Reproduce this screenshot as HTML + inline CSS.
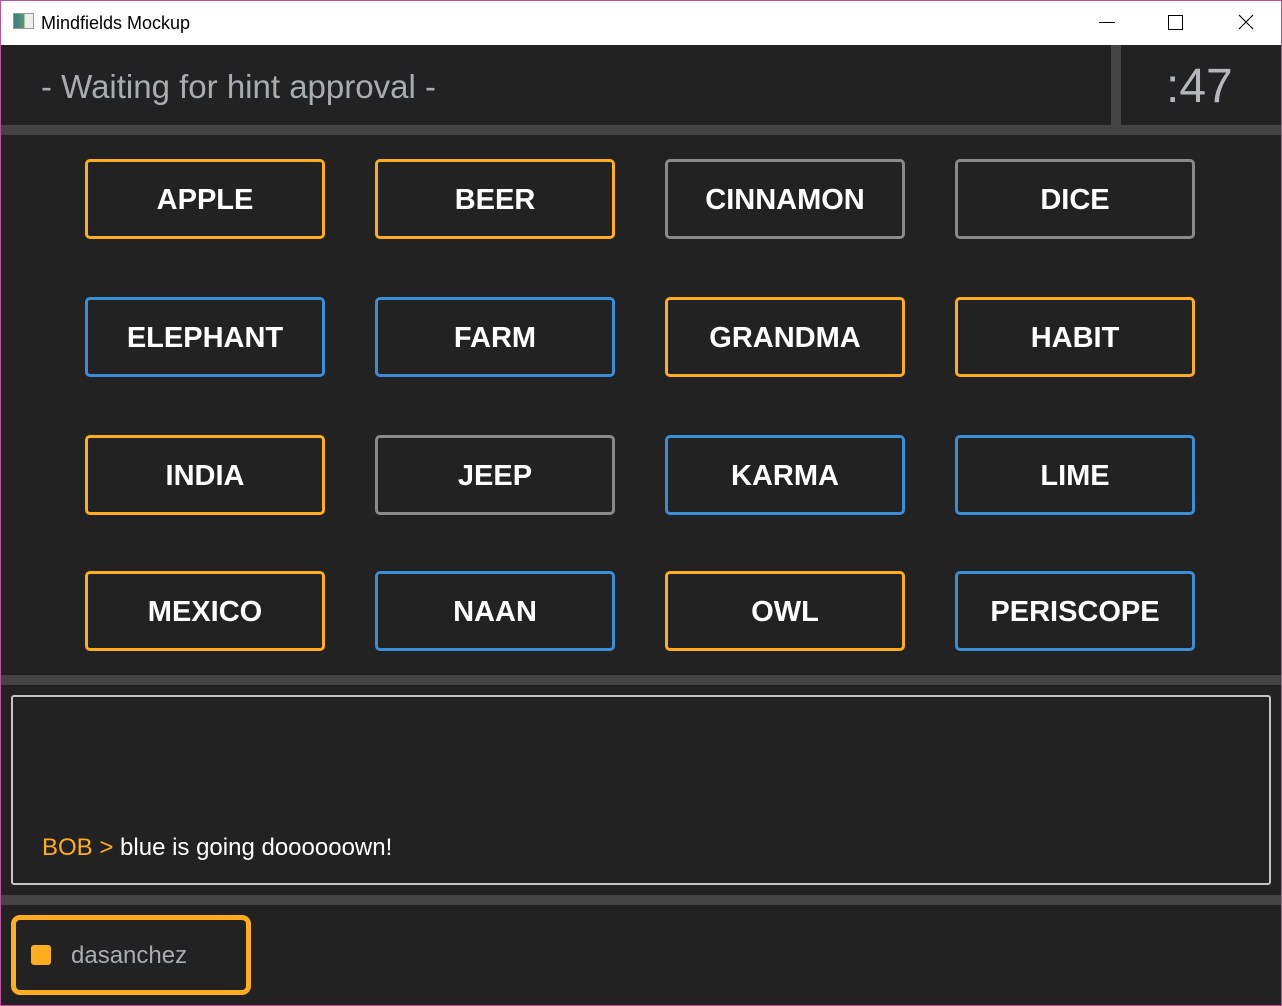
<!DOCTYPE html>
<html><head><meta charset="utf-8"><style>
*{margin:0;padding:0;box-sizing:border-box}
body{width:1282px;height:1006px;background:#222;font-family:"Liberation Sans",sans-serif;position:relative;overflow:hidden}
.frame{position:absolute;inset:0;border:1px solid #c2509f;pointer-events:none;z-index:9}
.title{position:absolute;left:0;top:0;width:1282px;height:45px;background:#fff}
.title .t{position:absolute;left:41px;top:13px;font-size:18px;color:#000}
.icon{position:absolute;left:13px;top:13px;width:21px;height:16px;border:1px solid #999;background:linear-gradient(90deg,#3b7a8a 0,#5a9a6a 55%,#eee 55%)}
.sep{position:absolute;background:#444}
.hdr{position:absolute;left:41px;top:68px;font-size:33px;color:#a9adb1}
.timer{position:absolute;left:1166px;top:59px;font-size:48px;color:#b4b8bc}
.b{position:absolute;width:240px;height:80px;border:3px solid;border-radius:5px;color:#fff;font-size:29px;font-weight:bold;display:flex;align-items:center;justify-content:center;padding-top:3px}
.o{border-color:#ffad1f}.l{border-color:#3a8ed8}.g{border-color:#8a8a8a}
.chat{position:absolute;left:11px;top:695px;width:1260px;height:190px;border:2px solid #c4c4c4;border-radius:3px}
.msg{position:absolute;left:42px;top:834px;font-size:24px;color:#fff}
.msg span{color:#ffad1f}
.user{position:absolute;left:11px;top:915px;width:240px;height:80px;border:5px solid #ffad1f;border-radius:9px}
.dot{position:absolute;left:31px;top:945px;width:20px;height:20px;background:#ffad1f;border-radius:3px}
.uname{position:absolute;left:71px;top:942px;font-size:24px;color:#a9adb1}
</style></head><body>
<div class="title"><div class="icon"></div><div class="t">Mindfields Mockup</div>
<svg style="position:absolute;left:1090px;top:10px" width="180" height="26" viewBox="0 0 180 26">
<line x1="9" y1="12.5" x2="25" y2="12.5" stroke="#000" stroke-width="1"/>
<rect x="78.5" y="5.5" width="14" height="14" fill="none" stroke="#000" stroke-width="1"/>
<path d="M149 5L163 19M163 5L149 19" stroke="#000" stroke-width="1.2"/>
</svg></div>
<div class="hdr">- Waiting for hint approval -</div>
<div class="sep" style="left:1111px;top:45px;width:10px;height:80px"></div>
<div class="timer">:47</div>
<div class="sep" style="left:0;top:125px;width:1282px;height:10px"></div>

<div class="b o" style="left:85px;top:159px">APPLE</div>
<div class="b o" style="left:375px;top:159px">BEER</div>
<div class="b g" style="left:665px;top:159px">CINNAMON</div>
<div class="b g" style="left:955px;top:159px">DICE</div>
<div class="b l" style="left:85px;top:297px">ELEPHANT</div>
<div class="b l" style="left:375px;top:297px">FARM</div>
<div class="b o" style="left:665px;top:297px">GRANDMA</div>
<div class="b o" style="left:955px;top:297px">HABIT</div>
<div class="b o" style="left:85px;top:435px">INDIA</div>
<div class="b g" style="left:375px;top:435px">JEEP</div>
<div class="b l" style="left:665px;top:435px">KARMA</div>
<div class="b l" style="left:955px;top:435px">LIME</div>
<div class="b o" style="left:85px;top:571px">MEXICO</div>
<div class="b l" style="left:375px;top:571px">NAAN</div>
<div class="b o" style="left:665px;top:571px">OWL</div>
<div class="b l" style="left:955px;top:571px">PERISCOPE</div>

<div class="sep" style="left:0;top:675px;width:1282px;height:10px"></div>
<div class="chat"></div>
<div class="msg"><span>BOB &gt;</span> blue is going doooooown!</div>
<div class="sep" style="left:0;top:895px;width:1282px;height:10px"></div>
<div class="user"></div><div class="dot"></div><div class="uname">dasanchez</div>
<div class="frame"></div>
</body></html>
